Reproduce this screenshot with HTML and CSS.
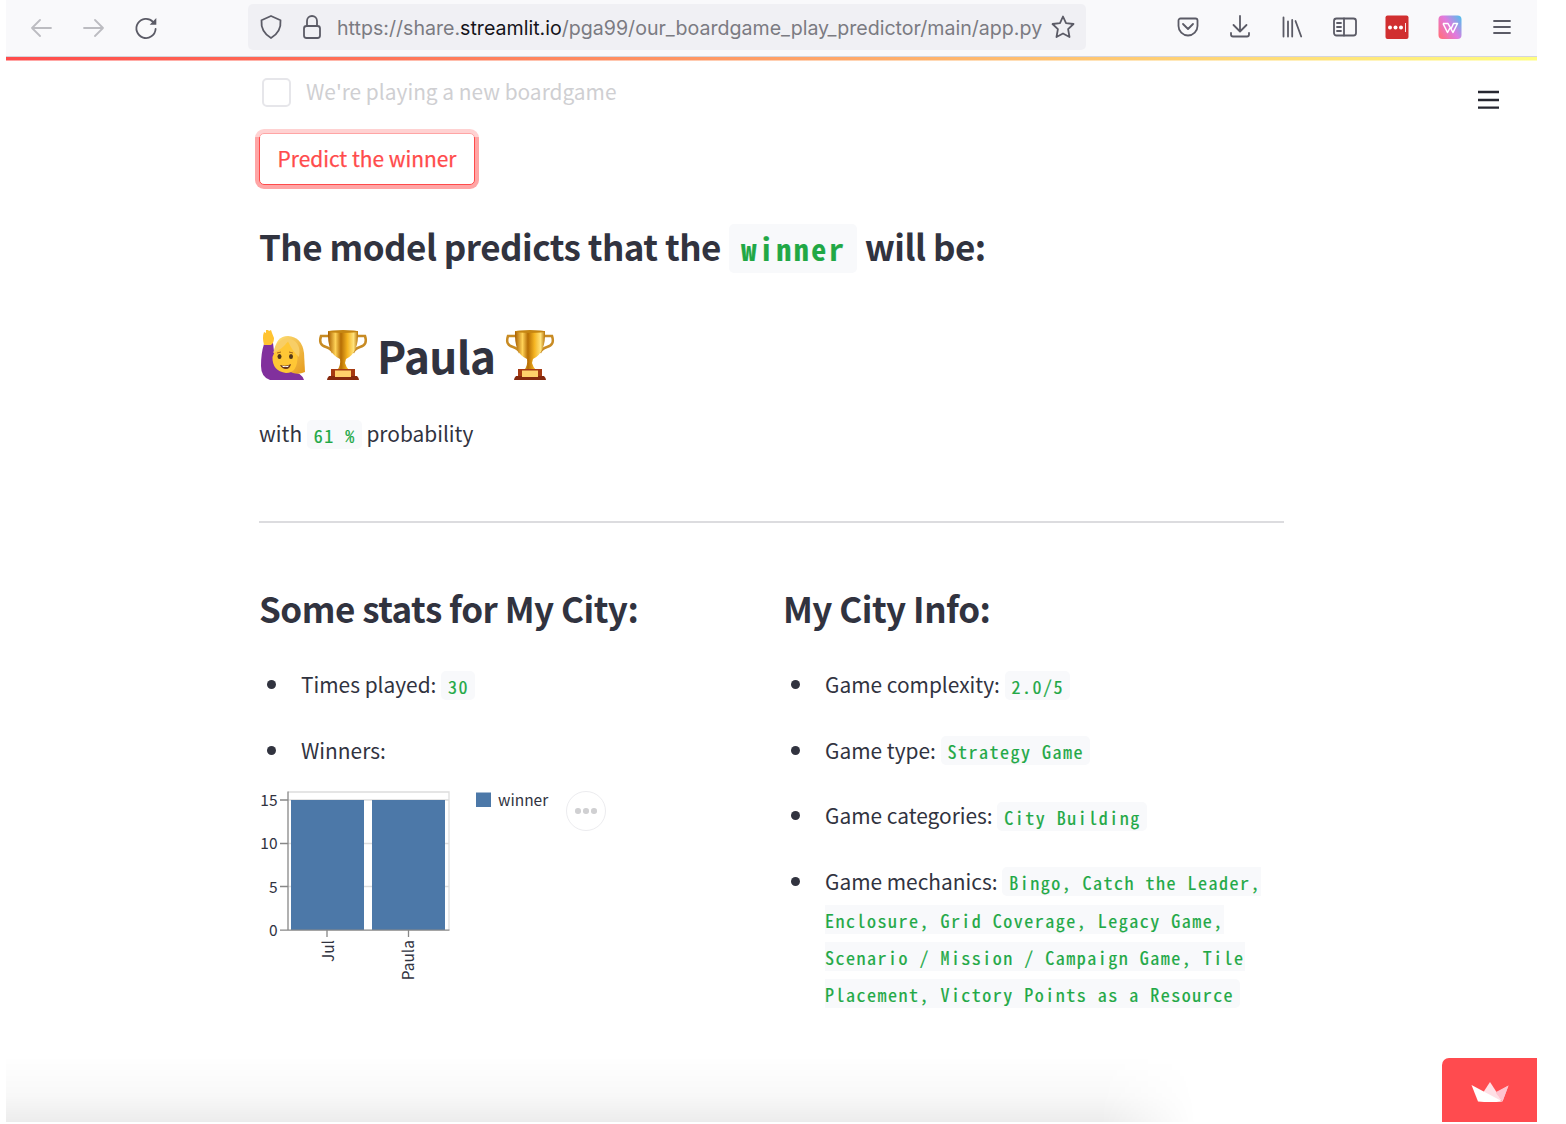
FILE: index.html
```html
<!DOCTYPE html>
<html lang="en">
<head>
<meta charset="utf-8">
<title>Boardgame play predictor</title>
<link rel="stylesheet" href="styles.css">
</head>
<body>
<div class="window">
  <header class="toolbar">
    <nav class="nav">
      <svg class="icon faded" width="24" height="24" viewBox="0 0 24 24"><path d="M22 12H3M11 4L3 12l8 8"/></svg>
      <svg class="icon faded" width="24" height="24" viewBox="0 0 24 24"><path d="M2 12h19M13 4l8 8-8 8"/></svg>
      <svg class="icon" width="24" height="24" viewBox="0 0 24 24"><path d="M21.600 13A9.600 9.600 0 1 1 19 5.800"/><path class="solid" d="M22.300 2v6.800h-6.600z"/></svg>
    </nav>
    <div class="urlbar">
      <svg class="icon" width="24" height="26" viewBox="0 0 24 26"><path d="M12 2L21.500 6.200Q22.500 18 12 24Q1.500 18 2.500 6.200z"/></svg>
      <svg class="icon lock" width="20" height="26" viewBox="0 0 20 26"><rect x="2" y="12" width="16" height="12" rx="2.500"/><path d="M5 12V7a5 5 0 0 1 10 0v5"/></svg>
      <span class="url">https://share.<b>streamlit.io</b>/pga99/our_boardgame_play_predictor/main/app.py</span>
      <svg class="icon star" width="24" height="24" viewBox="0 0 24 24"><path d="M12 1.500l3 6.700 7.500.8-5.400 5.200 1.400 7.800L12 18.500 5.500 22l1.400-7.800L1.500 9 9 8.200z"/></svg>
    </div>
    <div class="tools">
      <svg class="icon" width="24" height="24" viewBox="0 0 24 24"><path d="M4.500 3.500h15a2 2 0 0 1 2 2V11a9.500 9.500 0 0 1-19 0V5.500a2 2 0 0 1 2-2zM7 9l5 5 5-5"/></svg>
      <svg class="icon" width="24" height="24" viewBox="0 0 24 24"><path d="M12 1v15M5.500 10l6.500 6.500 6.500-6.500M3 18v1.500a2 2 0 0 0 2 2h14a2 2 0 0 0 2-2V18"/></svg>
      <svg class="icon" width="24" height="24" viewBox="0 0 24 24"><path d="M3.500 2.500v19M8 6.500v15M12.200 5v16.500M15.500 6L21.200 21.500"/></svg>
      <svg class="icon" width="24" height="24" viewBox="0 0 24 24"><rect x="1" y="3.500" width="22" height="17" rx="2.500"/><path d="M11 3.500v17M4 8h4M4 12h4M4 16h4"/></svg>
      <svg width="24" height="24" viewBox="0 0 24 24"><rect x=".5" y=".5" width="23" height="23.500" rx="2" fill="#d12f30"/><g fill="#fff"><circle cx="5" cy="12.500" r="2"/><circle cx="10.500" cy="12.500" r="2"/><circle cx="16" cy="12.500" r="2"/><path d="M20 8h.9v9H20z"/></g></svg>
      <svg width="24" height="24" viewBox="0 0 24 24"><defs><linearGradient id="w" x1="0" y1=".8" x2="1" y2=".1"><stop offset="0" stop-color="#ff6f82"/><stop offset=".5" stop-color="#e07be0"/><stop offset="1" stop-color="#55bdec"/></linearGradient></defs><rect x=".5" y=".5" width="23" height="23.500" rx="4" fill="url(#w)"/><path d="M5 8.500h5l3 5.500 2.500-5.500h4L15 17.500l-2-3.500M5 8.500l4.500 9 3-5.500" fill="none" stroke="#fff" stroke-width="1.500" stroke-linejoin="round"/></svg>
      <svg class="icon" width="24" height="24" viewBox="0 0 24 24"><path d="M4 6h16M4 12h16M4 18h16"/></svg>
    </div>
  </header>
  <div class="decoration"></div>
  <main class="page">
    <svg class="menu" width="22" height="20" viewBox="0 0 22 20"><path d="M0 2h21M0 10h21M0 17.700h21" stroke="#262730" stroke-width="2.300"/></svg>
    <label class="check"><span class="box"></span><span class="label">We're playing a new boardgame</span></label>
    <button class="predict">Predict the winner</button>
    <h2 class="result">The model predicts that the <code>winner</code> will be:</h2>
    <h1 class="name">
      <svg class="person" width="48" height="52" viewBox="0 0 48 52">
        <defs><linearGradient id="hair" x1="0" y1="0" x2="1" y2="1"><stop offset="0" stop-color="#ffe27a"/><stop offset="1" stop-color="#e59a1c"/></linearGradient></defs>
        <path d="M4 15L13 14Q14 24 16 35L32 43Q41 43 44 51H10Q1 48 1 37Q1 24 4 15z" fill="#81309d"/>
        <path d="M4 16Q2 8 4 3l2 1V1h2l1 1 2-1 1 3 2 5q0 5-3 7z" fill="#ffc331"/>
        <path d="M14 23Q16 7 28 7Q42 8 44 24L45 43Q39 46 33 44L15 36z" fill="url(#hair)"/>
        <path d="M12.500 28Q15 19 28 13Q35 18 37.500 26Q38 44 26 44Q12 42 12.500 28z" fill="#ffc735"/>
        <path d="M13 24Q23 20 28 12Q32 22 39 28Q42 12 27 9Q16 11 13 24z" fill="#f8ce66"/>
        <ellipse cx="19.500" cy="27.500" rx="2" ry="2.500" fill="#51371b"/><ellipse cx="31" cy="27.500" rx="2" ry="2.500" fill="#51371b"/>
        <path d="M20 36q6 2 11-1-1 5-5 5-4 0-6-4z" fill="#68351b"/><path d="M22 36.800q4 1 7-.4l-1 1.600h-5z" fill="#fff"/>
        <path d="M17 24l4-1M29 23l4 1" stroke="#a46518" fill="none"/>
      </svg>
      <svg class="cup" width="50" height="52" viewBox="0 0 50 52">
        <defs><linearGradient id="gold"><stop offset="0" stop-color="#a75d00"/><stop offset=".25" stop-color="#ffd257"/><stop offset=".43" stop-color="#b66d04"/><stop offset=".65" stop-color="#f5b522"/><stop offset=".85" stop-color="#ffe27b"/><stop offset="1" stop-color="#b87408"/></linearGradient></defs>
        <path d="M12 7H3Q0 16 8 18Q14 20 15 24M38 7h9Q50 16 42 18Q36 20 35 24" fill="none" stroke="#c88b23" stroke-width="2.500"/>
        <path d="M10 2H40Q41 24 28 30L27 34Q28 38 31 41H19Q23 37 22 30Q9 25 10 2z" fill="url(#gold)"/>
        <ellipse cx="25" cy="2.500" rx="15" ry="1.500" fill="#c68612"/>
        <path d="M13 40h24v8H13z" fill="#a63a12"/><path d="M11 47h28q2 2 2 4H9q0-2 2-4z" fill="#85290e"/><path d="M17 41.500h16V48H17z" fill="#ffd06b"/>
      </svg>
      <span>Paula</span>
      <svg class="cup" width="50" height="52" viewBox="0 0 50 52">
        <path d="M12 7H3Q0 16 8 18Q14 20 15 24M38 7h9Q50 16 42 18Q36 20 35 24" fill="none" stroke="#c88b23" stroke-width="2.500"/>
        <path d="M10 2H40Q41 24 28 30L27 34Q28 38 31 41H19Q23 37 22 30Q9 25 10 2z" fill="url(#gold)"/>
        <ellipse cx="25" cy="2.500" rx="15" ry="1.500" fill="#c68612"/>
        <path d="M13 40h24v8H13z" fill="#a63a12"/><path d="M11 47h28q2 2 2 4H9q0-2 2-4z" fill="#85290e"/><path d="M17 41.500h16V48H17z" fill="#ffd06b"/>
      </svg>
    </h1>
    <p class="prob">with <code>61 %</code> probability</p>
    <hr class="rule">
    <div class="columns">
      <section>
        <h2>Some stats for My City:</h2>
        <ul>
          <li>Times played: <code>30</code></li>
          <li>Winners:</li>
        </ul>
        <div class="chart">
          <svg width="300" height="205" viewBox="259 785 300 205">
            <g fill="none" stroke="#ddd" stroke-width="1.300"><path d="M288 792h161v138M288 800h161M288 843.500h161M288 886.500h161"/></g>
            <path d="M291 800h73v130h-73zM372 800h73v130h-73z" fill="#4c78a8"/>
            <path d="M288 791.500V930M280 930.200h169.500M280 800h8M280 843.500h8M280 886.500h8M327 930v7M408.500 930v7" fill="none" stroke="#888" stroke-width="1.300"/>
            <g class="tick" text-anchor="end"><text x="277.500" y="806">15</text><text x="277.500" y="849">10</text><text x="277.500" y="893">5</text><text x="277.500" y="936">0</text>
            <text transform="translate(333.500 940) rotate(-90)">Jul</text><text transform="translate(414 940) rotate(-90)">Paula</text></g>
            <path d="M476 792.500h15v14.500h-15z" fill="#4c78a8"/>
            <text class="tick" x="498" y="805.500">winner</text>
          </svg>
          <span class="more"><i></i><i></i><i></i></span>
        </div>
      </section>
      <section>
        <h2>My City Info:</h2>
        <ul>
          <li>Game complexity: <code>2.0/5</code></li>
          <li>Game type: <code>Strategy Game</code></li>
          <li>Game categories: <code>City Building</code></li>
          <li>Game mechanics: <code>Bingo, Catch the Leader,<br>Enclosure, Grid Coverage, Legacy Game,<br>Scenario / Mission / Campaign Game, Tile<br>Placement, Victory Points as a Resource</code></li>
        </ul>
      </section>
    </div>
    <div class="shade"></div>
    <div class="badge"><svg width="40" height="24" viewBox="0 0 40 24"><path d="M20 2L32 20.500 8 20.500z" fill="#ffdfe5"/><path d="M38.500 5.500L26 12l6.500 9.500z" fill="#ffc0cb"/><path d="M38.500 5.500L32.500 21.500 26 13z" fill="#ffc3cf"/><path d="M1.500 5L32.500 21.500Q20 22.500 8 21.500z" fill="#fff"/></svg></div>
  </main>
</div>
</body>
</html>
```
FILE: styles.css
```css
* { box-sizing: border-box; }
body { margin: 0; background: #fff; color: #31333f; font-family: "Noto Sans CJK JP", "Noto Sans", sans-serif; }
.window { width: 1531px; height: 1122px; margin-left: 6px; overflow: hidden; position: relative; display: flex; flex-direction: column; }
.toolbar { height: 57px; flex: none; background: #f9f9fb; border-bottom: 1px solid #d5d5dc; display: flex; align-items: flex-start; }
.icon { fill: none; stroke: #5b5b66; stroke-width: 1.8; stroke-linecap: round; stroke-linejoin: round; flex: none; }
.icon .solid { fill: #5b5b66; stroke: none; }
.faded { opacity: .38; }
.nav { display: flex; gap: 29px; padding: 16px 0 0 23px; width: 242px; }
.nav svg:last-child { margin-left: -1px; }
.urlbar { width: 838px; height: 46px; margin-top: 4px; border-radius: 5px; background: #f0f0f4; display: flex; align-items: center; padding-left: 11px; }
.lock { margin-left: 19px; }
.url { width: 706px; margin-left: 15px; white-space: nowrap; font: 19.600px/46px Inter, sans-serif; color: #7b7b82; padding-top: 2px; }
.url b { font-weight: 400; color: #15141a; }
.star { margin-left: 8px; }
.tools { display: flex; gap: 28.4px; padding: 15px 0 0 89.6px; }
.decoration { height: 4px; flex: none; background: linear-gradient(90deg, #ff4b4b, #ffa869 55%, #fffd80); border-bottom: 1px solid #ffffff80; }
.page { padding: 13px 253px 0; height: 1061px; }
.menu { position: absolute; left: 1472px; top: 90px; }
.check { display: flex; align-items: center; gap: 15px; height: 37px; padding-left: 3px; font-size: 20.9px; color: #cfcfd2; }
.box { width: 29px; height: 29px; border: 2px solid #e6e6ea; border-radius: 5px; }
.label { margin-top: -3px; }
.predict { display: block; position: relative; width: 216px; height: 52px; margin: 22px 0 0; padding: 0 0 2px; border: 1px solid #ff4b4b; border-radius: 5px; background: #fff; color: #ff4b4b; font: 400 20.9px/48px "Noto Sans CJK JP", sans-serif; -webkit-text-stroke: .25px #ff4b4b; box-shadow: 0 0 0 4px #ffa5a5; }
.predict::after { content: ""; position: absolute; left: -6px; right: -6px; top: -6px; height: 9px; background: #ffffff80; }
h1, h2, p, ul { margin: 0; }
h2 { font-size: 35px; line-height: 48px; font-weight: 700; letter-spacing: -.52px; white-space: nowrap; }
code { font-family: "Noto Sans Mono CJK JP", "DejaVu Sans Mono", monospace; font-size: 18px; line-height: 1; letter-spacing: 1.49px; -webkit-text-stroke: .2px #21a845; color: #21a845; background: #f8f9fb; border-radius: 5px; padding: 1.500px 6px 1.500px 7px; }
.result { margin-top: 37px; }
.result code { font-size: 30px; letter-spacing: 2.5px; padding: 2px 11px 3px 12px; margin-left: 1px; }
.name { margin-top: 57px; height: 56px; display: flex; align-items: center; font-size: 44px; line-height: 56px; letter-spacing: -.6px; }
.person { margin-left: 1px; }
.cup { margin-left: 10px; }
.name span { margin-left: 9px; }
.prob { margin-top: 32px; font-size: 20.9px; line-height: 37.3px; }
.rule { margin: 69px 0 0; border: 0; height: 2px; background: #dcdcdf; }
.columns { display: grid; grid-template-columns: 500px 500px; gap: 24px; padding-top: 61px; }
ul { list-style: none; padding: 34px 0 0 42px; display: flex; flex-direction: column; gap: 28.2px; }
li { position: relative; font-size: 20.9px; line-height: 37.3px; white-space: nowrap; }
li::before { content: ""; position: absolute; left: -34.5px; top: 14px; width: 9px; height: 9px; border-radius: 50%; background: #31333f; }
.chart { display: flex; margin-top: 16px; }
.chart svg { flex: none; }
.tick { font-size: 15.500px; fill: #31333f; }
.more { width: 40px; height: 40px; margin: 6px 0 0 7px; border: 1.500px solid #ececef; border-radius: 50%; display: flex; align-items: center; justify-content: center; gap: 2.500px; }
.more i { width: 5.500px; height: 5.500px; border-radius: 50%; background: #d0d0d2; }
.shade { position: absolute; left: 0; bottom: 0; width: 1190px; height: 66px; background: linear-gradient(#fff0, #00000007 60%, #00000013); -webkit-mask-image: linear-gradient(90deg, #000 92%, transparent); mask-image: linear-gradient(90deg, #000 92%, transparent); }
.badge { position: absolute; right: 0; bottom: 0; width: 95px; height: 64px; background: #ff4b4f; border-top-left-radius: 7px; display: flex; align-items: center; justify-content: center; padding-top: 3px; }
```
